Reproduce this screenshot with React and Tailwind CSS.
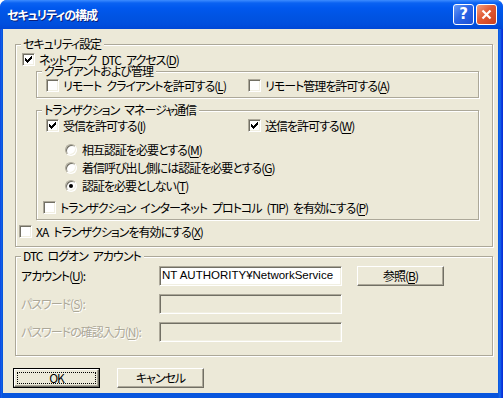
import React from "react";

// spaces in MS UI Gothic are wider than Noto's proportional space
const sp = (t) => t.replace(/ /g, "\u2002");

const Check = ({ checked }) => (
  <span className="flex h-[13px] w-[13px] shrink-0 items-center justify-center border border-t-[#ACA899] border-l-[#ACA899] border-b-white border-r-white bg-white shadow-[inset_1px_1px_0_#716F64,inset_-1px_-1px_0_#F1EFE2]">
    {checked && (
      <svg width="7" height="7" viewBox="0 0 7 7" shapeRendering="crispEdges">
        <rect x="6" y="0" width="1" height="1" />
        <rect x="5" y="1" width="2" height="1" />
        <rect x="0" y="2" width="1" height="1" />
        <rect x="4" y="2" width="3" height="1" />
        <rect x="0" y="3" width="2" height="1" />
        <rect x="3" y="3" width="3" height="1" />
        <rect x="0" y="4" width="5" height="1" />
        <rect x="1" y="5" width="3" height="1" />
        <rect x="2" y="6" width="1" height="1" />
      </svg>
    )}
  </span>
);

const Radio = ({ checked }) => (
  <span className="flex h-[12px] w-[12px] shrink-0 items-center justify-center rounded-full border border-t-[#ACA899] border-l-[#ACA899] border-b-white border-r-white bg-white shadow-[inset_1px_1px_0_#716F64,inset_-1px_-1px_0_#F1EFE2]">
    {checked && <span className="h-[4px] w-[4px] rounded-full bg-black" />}
  </span>
);

const Key = ({ k }) => (
  <>
    (<span className="underline underline-offset-2">{k}</span>)
  </>
);

const Group = ({ label, className, children }) => (
  <div
    className={`border border-[#ACA899] shadow-[inset_1px_1px_0_#fff,1px_1px_0_#fff] ${className}`}
  >
    <div className="-mt-[6px] mb-[2px] ml-[5px] w-fit whitespace-nowrap bg-[#ECE9D8] pl-[2px] pr-[3px] leading-[10px]">
      {sp(label)}
    </div>
    {children}
  </div>
);

const Field = ({ value, disabled }) => (
  <div
    className={`flex h-[20px] w-[183px] items-center overflow-hidden border border-t-[#ACA899] border-l-[#ACA899] border-b-white border-r-white px-[2px] shadow-[inset_1px_1px_0_#716F64,inset_-1px_-1px_0_#F1EFE2] ${
      disabled ? "bg-[#ECE9D8]" : "bg-white"
    }`}
  >
    <span className="whitespace-nowrap font-['Liberation_Sans',sans-serif] text-[11.5px] leading-none tracking-normal">
      {value}
    </span>
  </div>
);

const Button = ({ children, className = "" }) => (
  <div
    className={`flex h-[20px] w-[87px] items-center justify-center border border-t-white border-l-white border-b-[#716F64] border-r-[#716F64] bg-[#ECE9D8] leading-none shadow-[inset_-1px_-1px_0_#ACA899] ${className}`}
  >
    {children}
  </div>
);

const Gray = ({ children }) => (
  <span className="text-[#ACA899] [text-shadow:1px_1px_0_#fff]">{children}</span>
);

const CheckRow = ({ checked, text, k, className = "" }) => (
  <div className={`flex h-[13px] items-center gap-[4px] ${className}`}>
    <Check checked={checked} />
    <span className="whitespace-nowrap leading-none">
      {sp(text)}
      <Key k={k} />
    </span>
  </div>
);

const RadioRow = ({ checked, text, k }) => (
  <div className="flex h-[18px] items-center gap-[5px]">
    <Radio checked={checked} />
    <span className="whitespace-nowrap leading-none">
      {text}
      <Key k={k} />
    </span>
  </div>
);

export default function App() {
  return (
    <div className="h-[398px] w-[503px] bg-white">
      <div className="flex h-full flex-col overflow-hidden rounded-t-[7px] bg-[linear-gradient(to_right,#0831D9_0px,#166AEE_1px,#0855DD_2px,#0855DD_498px,#166AEE_500px,#0831D9_502px)] font-['Noto_Sans_CJK_JP',sans-serif] text-[12px] tracking-[-1px] text-black [font-feature-settings:'palt']">
        {/* title bar */}
        <div className="flex h-[29px] shrink-0 items-center bg-[linear-gradient(to_bottom,#3D8CFF_0px,#0A62F2_3px,#0058EE_8px,#0054E3_16px,#004FDE_24px,#0047D6_29px)] pl-[7px] pr-[6px]">
          <span className="flex-1 whitespace-nowrap text-[12px] font-bold tracking-[-1px] text-white [text-shadow:1px_1px_0_#0A1E7A]">
            セキュリティの構成
          </span>
          <div className="flex gap-[2px]">
            <div className="flex h-[21px] w-[21px] items-center justify-center rounded-[3px] border border-white bg-[linear-gradient(135deg,#6A9BF7_0%,#2B65E6_45%,#1C50D6_100%)]">
              <span className="font-['DejaVu_Sans',sans-serif] text-[15px] font-bold leading-none tracking-normal text-white">
                ?
              </span>
            </div>
            <div className="flex h-[21px] w-[21px] items-center justify-center rounded-[3px] border border-white bg-[linear-gradient(135deg,#F3A07E_0%,#E15A35_45%,#C9401F_100%)]">
              <svg width="11" height="11" viewBox="0 0 11 11">
                <path d="M1.5 1.5L9.5 9.5M9.5 1.5L1.5 9.5" stroke="#fff" strokeWidth="2.2" />
              </svg>
            </div>
          </div>
        </div>

        {/* client */}
        <div className="mb-[5px] ml-[3px] mr-[5px] flex-1 bg-[#ECE9D8] pt-[15px]">
          <Group label="セキュリティ設定" className="ml-[12px] h-[203px] w-[478px]">
            <CheckRow checked text="ネットワーク DTC アクセス" k="D" className="ml-[6px] mt-[4px]" />

            <Group label="クライアントおよび管理" className="ml-[20px] mt-[5px] h-[27px] w-[443px]">
              <div className="ml-[9px] mt-[3px] flex items-center">
                <CheckRow text="リモート クライアントを許可する" k="L" className="w-[202px]" />
                <CheckRow text="リモート管理を許可する" k="A" />
              </div>
            </Group>

            <Group label="トランザクション マネージャ通信" className="ml-[20px] mt-[12px] h-[110px] w-[443px]">
              <div className="ml-[9px] mt-[4px] flex items-center">
                <CheckRow checked text="受信を許可する" k="I" className="w-[202px]" />
                <CheckRow checked text="送信を許可する" k="W" />
              </div>

              <div className="ml-[28px] mt-[9px] flex flex-col">
                <RadioRow text="相互認証を必要とする" k="M" />
                <RadioRow text="着信呼び出し側には認証を必要とする" k="G" />
                <RadioRow checked text="認証を必要としない" k="T" />
              </div>

              <CheckRow
                text="トランザクション インターネット プロトコル (TIP) を有効にする"
                k="P"
                className="ml-[6px] mt-[6px]"
              />
            </Group>

            <CheckRow text="XA トランザクションを有効にする" k="X" className="ml-[3px] mt-[5px]" />
          </Group>

          <Group label="DTC ログオン アカウント" className="ml-[12px] mt-[9px] h-[100px] w-[478px]">
            <div className="ml-[5px] mt-[5px] flex items-center">
              <span className="w-[138px] leading-none">
                アカウント<Key k="U" />:
              </span>
              <Field value="NT AUTHORITY¥NetworkService" />
              <Button className="ml-[15px]">
                参照<Key k="B" />
              </Button>
            </div>
            <div className="ml-[5px] mt-[8px] flex items-center">
              <span className="w-[138px] leading-none">
                <Gray>
                  パスワード<Key k="S" />:
                </Gray>
              </span>
              <Field disabled />
            </div>
            <div className="ml-[5px] mt-[8px] flex items-center">
              <span className="w-[138px] leading-none">
                <Gray>
                  パスワードの確認入力<Key k="N" />:
                </Gray>
              </span>
              <Field disabled />
            </div>
          </Group>

          <div className="ml-[10px] mt-[12px] flex gap-[17px]">
            <div className="h-[20px] w-[87px] border border-black">
              <div className="flex h-full w-full border border-t-white border-l-white border-b-[#716F64] border-r-[#716F64] p-[2px] shadow-[inset_-1px_-1px_0_#ACA899]">
                <div className="flex flex-1 items-center justify-center border border-dotted border-black leading-none">
                  OK
                </div>
              </div>
            </div>
            <Button>キャンセル</Button>
          </div>
        </div>
      </div>
    </div>
  );
}
